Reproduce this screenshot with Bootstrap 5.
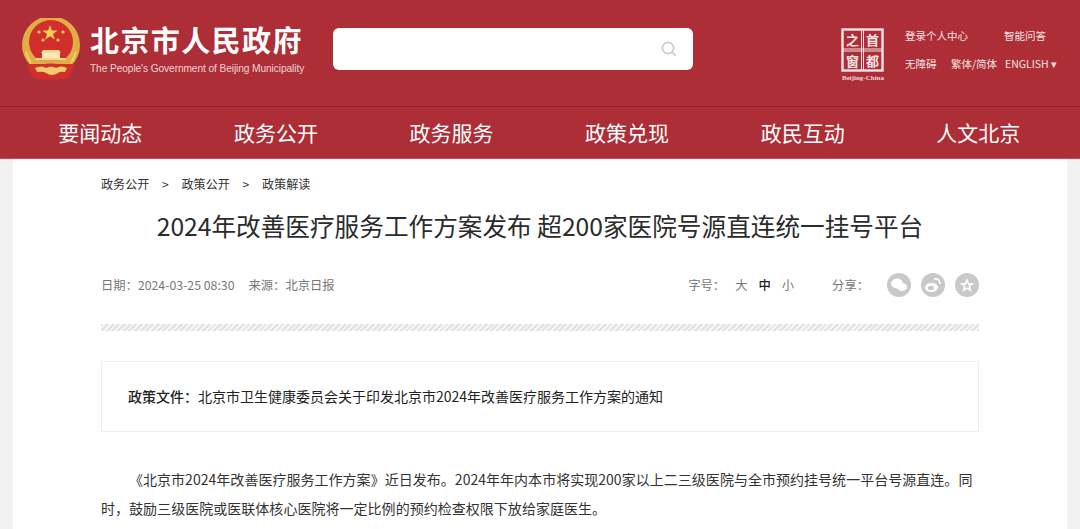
<!DOCTYPE html>
<html lang="zh-CN">
<head>
  <meta charset="UTF-8" />
  <meta name="viewport" content="width=device-width, initial-scale=1.0" />
  <title>北京市人民政府</title>
  <link href="https://cdn.jsdelivr.net/npm/bootstrap@5.3.2/dist/css/bootstrap.min.css" rel="stylesheet">
  <style>
    body {
      background-color: #f2f2f2;
      font-family: "Liberation Sans", "Noto Sans CJK SC", sans-serif;
      height: 529px;
      overflow: hidden;
    }
    .top-head {
      background-color: #ad2e36;
      height: 107px;
      border-bottom: 1px solid #97232b;
      padding: 18px 22px 0 22px;
      color: #fff;
    }
    .site-name {
      font-family: "Noto Sans CJK SC", sans-serif;
      font-size: 29px;
      font-weight: 700;
      line-height: 36px;
      letter-spacing: 1.4px;
      margin: 3px 0 0 0;
      white-space: nowrap;
    }
    .site-en {
      font-size: 10.2px;
      line-height: 14px;
      margin-top: 5px;
      color: #f1d5d7;
      white-space: nowrap;
      letter-spacing: -.1px;
    }
    .search-box {
      width: 360px;
      height: 42px;
      margin: 10px 0 0 29px;
      background: #fff;
      border-radius: 6px;
      padding-right: 15px;
    }
    .top-links {
      font-size: 10.5px;
      width: 153px;
      margin: 11px 0 0 18px;
      row-gap: 14px;
      line-height: 14px;
      color: #f6e4e5;
      font-family: "Noto Sans CJK SC", sans-serif;
    }
    .top-links span { white-space: nowrap; }
    .link-first { width: 99px; }
    .link-access { width: 46px; }
    .link-trad { width: 54px; }
    .main-menu {
      background-color: #ad2e36;
      height: 52px;
      border-bottom: 1px solid #c9484f;
      padding-left: 12.5px;
    }
    .main-menu a {
      color: #fff;
      text-decoration: none;
      font-size: 21px;
      line-height: 51px;
      font-family: "Noto Sans CJK SC", sans-serif;
      width: 175.6px;
      text-align: center;
      white-space: nowrap;
    }
    .page-sheet {
      background: #fff;
      width: 1054px;
      margin-left: 13px;
      padding: 0 88px;
      height: 370px;
      font-family: "Noto Sans CJK SC", sans-serif;
    }
    .crumbs {
      font-size: 12.1px;
      color: #333;
      padding-top: 16px;
      line-height: 18px;
      gap: 12.7px;
    }
    .article-title {
      font-size: 24.65px;
      font-weight: 400;
      line-height: 36px;
      color: #2b2b2b;
      text-align: center;
      margin: 14px 0 0 0;
      white-space: nowrap;
    }
    .meta-row {
      font-size: 12.3px;
      color: #777;
      margin-top: 30px;
      height: 24px;
    }
    .meta-source { margin-left: 14px; }
    .size-pick { gap: 11px; margin: 0 38px 0 10px; }
    .size-pick b { color: #222; font-weight: 500; }
    .share-dot {
      width: 24px;
      height: 24px;
      border-radius: 50%;
      background: #c9c9c9;
      margin-left: 10px;
    }
    .share-first { margin-left: 18px; }
    .hatch-line {
      height: 7px;
      margin-top: 27px;
      background: repeating-linear-gradient(135deg, #e2e2e2 0 2px, #f6f6f6 2px 4px);
    }
    .policy-box {
      border: 1px solid #eee;
      height: 71px;
      margin-top: 30px;
      padding-left: 26px;
      font-size: 14px;
      color: #222;
    }
    .policy-box b { font-weight: 500; }
    .article-text {
      font-size: 14px;
      line-height: 29px;
      color: #333;
      text-indent: 28px;
      letter-spacing: .03px;
      margin-top: 33px;
      margin-bottom: 0;
    }
  </style>
</head>
<body>
  <div class="top-head d-flex">
    <svg width="60" height="62" viewBox="0 0 60 62">
      <circle cx="29" cy="27" r="29" fill="#e2ad45"/>
      <circle cx="29" cy="24" r="22" fill="#d12f2b"/>
      <path d="M4 34q4 13 13 18M54 34q-4 13-13 18" fill="none" stroke="#f3d06d" stroke-width="2"/>
      <polygon points="28,7 29.9,12.6 35.7,12.6 31,16 32.8,21.6 28,18.2 23.2,21.6 25,16 20.3,12.6 26.1,12.6" fill="#f6cf5b"/>
      <circle cx="17" cy="14" r="1.6" fill="#f6cf5b"/>
      <circle cx="21" cy="22" r="1.6" fill="#f6cf5b"/>
      <circle cx="36" cy="22" r="1.6" fill="#f6cf5b"/>
      <circle cx="41" cy="14" r="1.6" fill="#f6cf5b"/>
      <path d="M21 32h16l2 3h-20z" fill="#f6d98a"/>
      <rect x="20" y="35" width="18" height="5" fill="#fbe9b8"/>
      <rect x="14" y="40" width="30" height="2.5" fill="#f6d98a"/>
      <rect x="9" y="42.5" width="40" height="3" fill="#e2ad45"/>
      <path d="M5 46h48l-6 14q-9 2-18 2t-18-2z" fill="#d12f2b"/>
      <path d="M13 50q7-3 11 0q5-3 10 0q5-3 11 0l-2 4q-5-1-7 1q-6 4-12 0q-3-2-9-1z" fill="#f3cd6a"/>
    </svg>
    <div class="ms-2">
      <p class="site-name">北京市人民政府</p>
      <div class="site-en">The People's Government of Beijing Municipality</div>
    </div>
    <div class="search-box d-flex align-items-center justify-content-end">
      <svg width="18" height="18" viewBox="0 0 18 18" fill="none" stroke="#c8c8c8" stroke-width="1.6">
        <circle cx="8" cy="8" r="5.6"/>
        <path d="M12.2 12.2l3.6 3.6"/>
      </svg>
    </div>
    <div class="ms-auto d-flex">
      <svg width="47" height="62" viewBox="0 0 47 62" class="mt-1">
        <rect x="2.5" y="7.5" width="40" height="41" fill="none" stroke="#f6e4e5" stroke-width="2.4"/>
        <path d="M21.5 8v40M23.5 8v40M3 27h39M3 29h39" stroke="#f6e4e5" stroke-width="1"/>
        <text x="12.5" y="23" font-size="13" font-weight="700" text-anchor="middle" fill="#f6e4e5">之</text>
        <text x="32.5" y="23" font-size="13" font-weight="700" text-anchor="middle" fill="#f6e4e5">首</text>
        <text x="12.5" y="44" font-size="13" font-weight="700" text-anchor="middle" fill="#f6e4e5">窗</text>
        <text x="32.5" y="44" font-size="13" font-weight="700" text-anchor="middle" fill="#f6e4e5">都</text>
        <text x="23" y="57.5" font-size="7" font-weight="700" text-anchor="middle" font-family="Liberation Serif, serif" fill="#f1d5d7">Beijing-China</text>
      </svg>
    </div>
    <div class="top-links d-flex flex-wrap align-content-start">
      <span class="link-first">登录个人中心</span><span>智能问答</span>
      <span class="link-access">无障碍</span><span class="link-trad">繁体/简体</span><span>ENGLISH ▾</span>
    </div>
  </div>

  <nav class="main-menu d-flex">
    <a href="#">要闻动态</a>
    <a href="#">政务公开</a>
    <a href="#">政务服务</a>
    <a href="#">政策兑现</a>
    <a href="#">政民互动</a>
    <a href="#">人文北京</a>
  </nav>

  <div class="page-sheet">
    <div class="crumbs d-flex">
      <span>政务公开</span><span>&gt;</span><span>政策公开</span><span>&gt;</span><span>政策解读</span>
    </div>
    <h1 class="article-title">2024年改善医疗服务工作方案发布 超200家医院号源直连统一挂号平台</h1>
    <div class="meta-row d-flex align-items-center">
      <span>日期：2024-03-25 08:30</span>
      <span class="meta-source">来源：北京日报</span>
      <span class="ms-auto">字号：</span>
      <span class="size-pick d-flex"><span>大</span><b>中</b><span>小</span></span>
      <span>分享：</span>
      <span class="share-dot share-first d-flex align-items-center justify-content-center">
        <svg width="18" height="16" viewBox="0 0 18 16" fill="#fff"><ellipse cx="7" cy="6.5" rx="6" ry="5"/><ellipse cx="12" cy="10" rx="5" ry="4"/></svg>
      </span>
      <span class="share-dot d-flex align-items-center justify-content-center">
        <svg width="18" height="16" viewBox="0 0 18 16"><ellipse cx="7.5" cy="10.5" rx="6.5" ry="4.5" fill="#fff"/><ellipse cx="7" cy="11" rx="3" ry="2.2" fill="#c9c9c9"/><path d="M10 2q6-1 6 5" fill="none" stroke="#fff" stroke-width="1.6"/></svg>
      </span>
      <span class="share-dot d-flex align-items-center justify-content-center">
        <svg width="16" height="16" viewBox="0 0 16 16"><polygon points="8,1 10,6 15.5,6.2 11.2,9.6 12.7,15 8,12 3.3,15 4.8,9.6 .5,6.2 6,6" fill="#fff"/><polygon points="8,5.5 9,7.8 11,8 9.4,9.4 10,11.6 8,10.4 6,11.6 6.6,9.4 5,8 7,7.8" fill="#c9c9c9"/></svg>
      </span>
    </div>
    <div class="hatch-line"></div>
    <div class="policy-box d-flex align-items-center">
      <b>政策文件：</b><span>北京市卫生健康委员会关于印发北京市2024年改善医疗服务工作方案的通知</span>
    </div>
    <p class="article-text">《北京市2024年改善医疗服务工作方案》近日发布。2024年年内本市将实现200家以上二三级医院与全市预约挂号统一平台号源直连。同时，鼓励三级医院或医联体核心医院将一定比例的预约检查权限下放给家庭医生。</p>
  </div>
  <script src="https://cdn.jsdelivr.net/npm/bootstrap@5.3.2/dist/js/bootstrap.bundle.min.js"></script>
</body>
</html>
